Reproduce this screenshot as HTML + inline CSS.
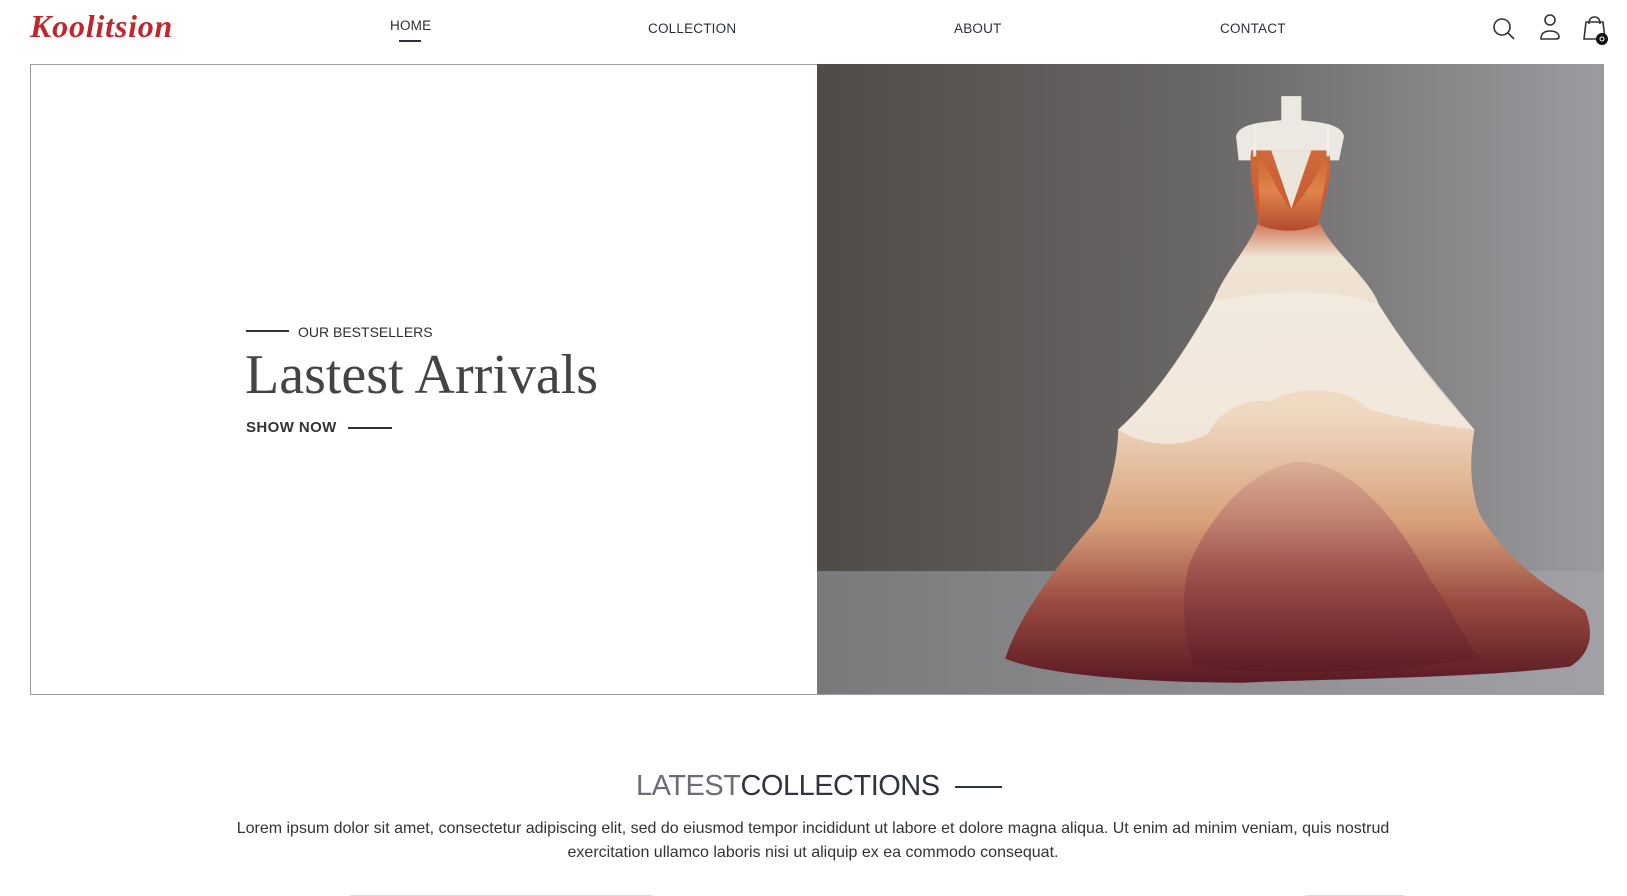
<!DOCTYPE html>
<html><head><meta charset="utf-8">
<style>
*{margin:0;padding:0;box-sizing:border-box}
body{width:1627px;height:896px;overflow:hidden;background:#fff;position:relative;font-family:"Liberation Sans",sans-serif;color:#2c2f36}
.abs{position:absolute;white-space:nowrap}
.nav{font-size:13.5px;letter-spacing:.2px;color:#2b2f38}
</style></head><body>
<div class="abs" style="left:30px;top:8px;font-family:'Liberation Serif',serif;font-style:italic;font-weight:bold;font-size:32px;color:#c0272d;letter-spacing:.8px">Koolitsion</div>
<div class="abs nav" style="left:390px;top:18px">HOME</div>
<div class="abs" style="left:399px;top:40px;width:22px;height:2px;background:#2b2f38"></div>
<div class="abs nav" style="left:648px;top:21px">COLLECTION</div>
<div class="abs nav" style="left:954px;top:21px">ABOUT</div>
<div class="abs nav" style="left:1220px;top:21px">CONTACT</div>
<svg class="abs" style="left:1480px;top:8px" width="147" height="40" viewBox="0 0 147 40" fill="none" stroke="#333" stroke-width="1.6">
<circle cx="22" cy="19" r="8"/><path d="M28 25l6 6"/>
<circle cx="70" cy="12" r="5"/><path d="M61 31c0-6 4-8 9-8s9 2 9 6c0 2-2 2-4 2H62z"/>
<path d="M106 14h17l2 17h-21z"/><path d="M109 16c0-5 2-7 5.5-7s5.5 2 5.5 7"/>
<circle cx="122" cy="31" r="6" fill="#111" stroke="none"/><circle cx="122" cy="31" r="2" stroke="#fff" stroke-width="1"/>
</svg>
<div class="abs" style="left:30px;top:64px;width:1574px;height:631px;border:1px solid #9a9da2"></div>
<svg class="abs" style="left:817px;top:64px" width="787" height="630" viewBox="0 0 1568 1568" preserveAspectRatio="none">
<defs>
<linearGradient id="bg" x1="0" x2="1"><stop offset="0" stop-color="#4f4b49"/><stop offset=".5" stop-color="#6a6867"/><stop offset="1" stop-color="#9c9ba0"/></linearGradient>
<linearGradient id="fl" x1="0" x2="1"><stop offset="0" stop-color="#7a797b"/><stop offset="1" stop-color="#a2a1a6"/></linearGradient>
<linearGradient id="sk" x1="0" y1="0" x2="0" y2="1"><stop offset="0" stop-color="#d06a3a"/><stop offset=".12" stop-color="#c8582f"/><stop offset=".2" stop-color="#efe4d6"/><stop offset=".5" stop-color="#efd8c0"/><stop offset=".7" stop-color="#d7a07a"/><stop offset=".85" stop-color="#9a4a40"/><stop offset="1" stop-color="#5a1a24"/></linearGradient>
<linearGradient id="bo" x1="0" y1="0" x2="0" y2="1"><stop offset="0" stop-color="#c8602f"/><stop offset=".5" stop-color="#e0844a"/><stop offset="1" stop-color="#b44a30"/></linearGradient>
<linearGradient id="in" x1="0" y1="0" x2="0" y2="1"><stop offset="0" stop-color="#d8a890"/><stop offset=".5" stop-color="#9a4a4c"/><stop offset="1" stop-color="#5a1a24"/></linearGradient>
</defs>
<rect width="1568" height="1568" fill="url(#bg)"/>
<rect y="1262" width="1568" height="306" fill="url(#fl)"/>
<path d="M925 80h40v60c40 5 80 10 85 40l-10 60H840l-5-60c5-30 45-35 90-40z" fill="#ece9e3"/>
<path d="M375 1480C400 1380 470 1260 560 1130C590 1040 600 960 600 910C680 820 740 700 790 590C810 520 860 460 880 390C870 330 860 260 865 215H1020C1030 270 1010 340 1000 390C1020 460 1100 530 1120 600C1180 720 1240 820 1310 910C1300 980 1300 1050 1320 1120C1380 1250 1470 1310 1530 1360C1550 1420 1540 1470 1500 1500C1300 1530 1000 1530 850 1540C650 1540 450 1520 375 1480z" fill="url(#sk)"/>
<path d="M740 1250C790 1100 880 1000 960 990C1060 990 1150 1120 1220 1280C1270 1370 1290 1430 1320 1480C1100 1520 900 1520 750 1500C730 1420 725 1330 740 1250z" fill="url(#in)" opacity=".7"/>
<path d="M600 910C650 950 720 960 780 920C800 860 860 830 900 840C960 800 1050 800 1100 860C1160 880 1230 900 1310 910C1250 820 1180 720 1120 600C1060 560 900 560 790 590C740 700 680 820 600 910z" fill="#f2ebe2" opacity=".8"/>
<path d="M880 215C910 300 940 360 945 360C950 360 990 300 1020 215C1015 300 1000 360 1000 400C960 420 920 420 880 400C885 340 875 280 880 215z" fill="url(#bo)"/>
<path d="M905 215L945 360L985 215z" fill="#ece5dc"/>
<path d="M872 150v80M1018 150v80" stroke="#eee" stroke-width="6"/>
</svg>
<div class="abs" style="left:246px;top:330px;width:43px;height:1.5px;background:#333"></div>
<div class="abs" style="left:298px;top:324px;font-size:14px;color:#2e2e2e">OUR BESTSELLERS</div>
<div class="abs" style="left:245px;top:343px;font-family:'Liberation Serif',serif;font-size:56px;color:#444">Lastest Arrivals</div>
<div class="abs" style="left:246px;top:419px;font-size:15px;font-weight:bold;color:#333;letter-spacing:.4px">SHOW NOW</div>
<div class="abs" style="left:348px;top:427px;width:44px;height:1.5px;background:#333"></div>
<div class="abs" style="left:636px;top:770px;font-size:29px;letter-spacing:-.5px"><span style="color:#6b6e76">LATEST</span><span style="color:#2f3441">COLLECTIONS</span></div>
<div class="abs" style="left:228px;width:1170px;top:817px;white-space:normal;text-align:center;font-size:16px;line-height:24px;color:#333;letter-spacing:0">Lorem ipsum dolor sit amet, consectetur adipiscing elit, sed do eiusmod tempor incididunt ut labore et dolore magna aliqua. Ut enim ad minim veniam, quis nostrud exercitation ullamco laboris nisi ut aliquip ex ea commodo consequat.</div>
<div class="abs" style="left:955px;top:786px;width:47px;height:2px;background:#2f3441"></div>
<div class="abs" style="left:350px;top:895px;width:302px;height:1px;background:#ddd"></div>
<div class="abs" style="left:1305px;top:895px;width:100px;height:1px;background:#ddd"></div>
</body></html>
